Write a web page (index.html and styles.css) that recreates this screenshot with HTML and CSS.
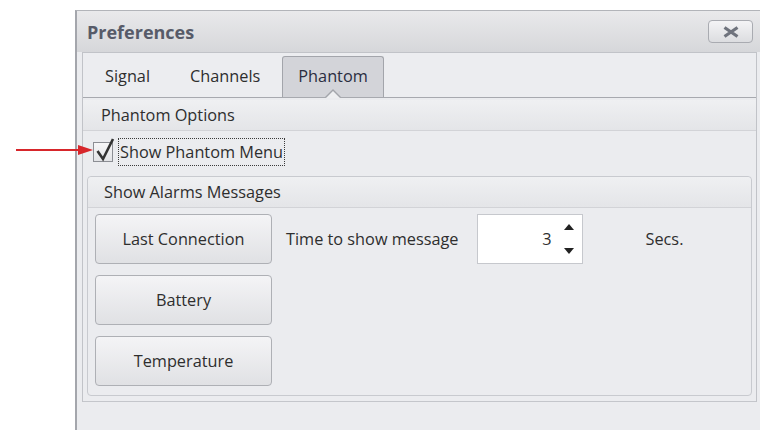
FILE: index.html
```html
<!DOCTYPE html>
<html lang="en">
<head>
    <meta charset="UTF-8">
    <title>Preferences</title>
    <link rel="stylesheet" href="styles.css">
</head>
<body>
    <div class="window">
        <div class="titlebar">
            <span class="title">Preferences</span>
            <button class="close">
                <svg width="18" height="12" viewBox="0 0 18 12"><path d="M2.5 1.5 L15.5 10.5 M15.5 1.5 L2.5 10.5" stroke="#6f737d" stroke-width="3.2"/></svg>
            </button>
        </div>
        <div class="tabcontrol">
            <div class="tabstrip">
                <span class="tab">Signal</span>
                <span class="tab">Channels</span>
                <span class="tab active">Phantom</span>
            </div>
            <div class="page">
                <div class="section-head">Phantom Options</div>
                <div class="check-row">
                    <span class="checkbox">
                        <svg width="22" height="26" viewBox="0 0 22 26"><path d="M3.5 14 L9 22 L19 2" fill="none" stroke="#333" stroke-width="2.6"/></svg>
                    </span>
                    <span class="check-label">Show Phantom Menu</span>
                </div>
                <div class="group">
                    <div class="group-head">Show Alarms Messages</div>
                    <div class="group-body">
                        <div class="buttons">
                            <button class="btn">Last Connection</button>
                            <button class="btn">Battery</button>
                            <button class="btn">Temperature</button>
                        </div>
                        <div class="time-row">
                            <span class="time-label">Time to show message</span>
                            <div class="spin">
                                <span class="spin-value">3</span>
                                <span class="spin-arrows">
                                    <svg width="10" height="6" viewBox="0 0 10 6"><path d="M0 6 L5 0 L10 6 Z" fill="#222"/></svg>
                                    <svg width="10" height="6" viewBox="0 0 10 6"><path d="M0 0 L5 6 L10 0 Z" fill="#222"/></svg>
                                </span>
                            </div>
                            <span class="secs">Secs.</span>
                        </div>
                    </div>
                </div>
            </div>
        </div>
    </div>

    <!-- red pointer arrow -->
    <svg class="pointer" width="78" height="12" viewBox="0 0 78 12">
        <path d="M0 6 L64 6" stroke="#d7262b" stroke-width="2"/>
        <path d="M62 1 L77 6 L62 11 Z" fill="#d7262b"/>
    </svg>
</body>
</html>
```

FILE: styles.css
```css
body {
    margin: 0;
    overflow: hidden;
    background-color: #fff;
    font-family: "Open Sans", "DejaVu Sans", sans-serif;
    font-size: 16.3px;
    color: #2e2e2e;
}
.window {
    margin: 10px 0 0 75px;
    width: 683px;
    height: 420px;
    border-left: 2px solid #a4a6ac;
    border-top: 1px solid #b2b4b9;
    background-color: #ebecef;
}
.titlebar {
    display: flex;
    align-items: center;
    height: 41px;
    padding-left: 10px;
    background: linear-gradient(#e9e9eb, #d6d7da);
}
.title {
    font-weight: bold;
    font-size: 18px;
    color: #575b69;
}
.close {
    margin-left: auto;
    margin-right: 7px;
    width: 45px;
    height: 23px;
    padding: 0;
    display: flex;
    align-items: center;
    justify-content: center;
    border: 1px solid #a9abb1;
    border-radius: 4px;
    background: linear-gradient(#f4f4f6, #dcdde0);
}
.tabcontrol {
    margin: 0 3px 0 5px;
    border: 1px solid #c1c3c8;
    border-bottom: none;
}
.tabstrip {
    display: flex;
    align-items: flex-end;
    height: 44px;
    padding-left: 2px;
    background-color: #ecedf0;
    border-bottom: 1px solid #a7a9af;
}
.tab {
    position: relative;
    display: flex;
    align-items: center;
    height: 38px;
    padding: 0 17px 2px 17px;
    margin: 0 2px;
    border: 1px solid transparent;
    border-bottom: none;
}
.tab.active {
    padding: 0 15px 2px 15px;
    margin-left: 2px;
    background-color: #d3d4d9;
    border-color: #a3a5ab;
    border-radius: 3px 3px 0 0;
    color: #2a2d40;
}
.tab.active::before {
    content: "";
    position: absolute;
    left: 50%;
    bottom: 0;
    margin-left: -8px;
    border: 8px solid transparent;
    border-top: none;
    border-bottom-color: #a3a5ab;
}
.tab.active::after {
    content: "";
    position: absolute;
    left: 50%;
    bottom: -1px;
    margin-left: -7px;
    border: 7px solid transparent;
    border-top: none;
    border-bottom-color: #eeeff1;
}
.page {
    height: 301px;
    padding-top: 2px;
    border-bottom: 1px solid #c4c6cb;
}
.section-head {
    height: 30px;
    line-height: 30px;
    padding-left: 18px;
    background: linear-gradient(#eff0f2, #e4e5e8);
    border-bottom: 1px solid #d2d3d7;
}
.check-row {
    display: flex;
    align-items: center;
    margin: 7px 0 0 10px;
    height: 28px;
}
.checkbox {
    position: relative;
    width: 18px;
    height: 18px;
    border: 1px solid #8c8e94;
    background: linear-gradient(#f7f7f8, #e2e3e6);
}
.checkbox svg {
    position: absolute;
    left: 0;
    top: -6px;
}
.check-label {
    margin-left: 5px;
    padding: 0 1px;
    height: 26px;
    line-height: 26px;
    border: 1px dotted #3a3a3a;
}
.group {
    margin: 10px 4px 0 4px;
    border: 1px solid #c8cacf;
    border-radius: 4px;
}
.group-head {
    height: 30px;
    line-height: 31px;
    padding-left: 16px;
    background: linear-gradient(#eff0f2, #e4e5e8);
    border-bottom: 1px solid #d2d3d7;
    border-radius: 4px 4px 0 0;
}
.group-body {
    display: flex;
    padding: 6px 6px 9px 7px;
}
.buttons {
    display: flex;
    flex-direction: column;
    gap: 11px;
}
.btn {
    width: 177px;
    height: 50px;
    font-family: inherit;
    font-size: 16.3px;
    color: #2e2e2e;
    border: 1px solid #aeb0b5;
    border-radius: 4px;
    background: linear-gradient(#f4f4f6, #e0e1e4);
}
.time-row {
    display: flex;
    align-items: center;
    align-self: flex-start;
    height: 50px;
}
.time-label {
    margin-left: 14px;
}
.spin {
    display: flex;
    align-items: center;
    justify-content: flex-end;
    margin-left: 18px;
    width: 104px;
    height: 48px;
    background-color: #fff;
    border: 1px solid #c6c8cd;
}
.spin-value {
    margin-right: 12px;
}
.spin-arrows {
    display: flex;
    flex-direction: column;
    justify-content: space-between;
    height: 30px;
    margin-right: 8px;
}
.secs {
    margin-left: 63px;
}
.pointer {
    position: absolute;
    left: 16px;
    top: 144px;
}
```
